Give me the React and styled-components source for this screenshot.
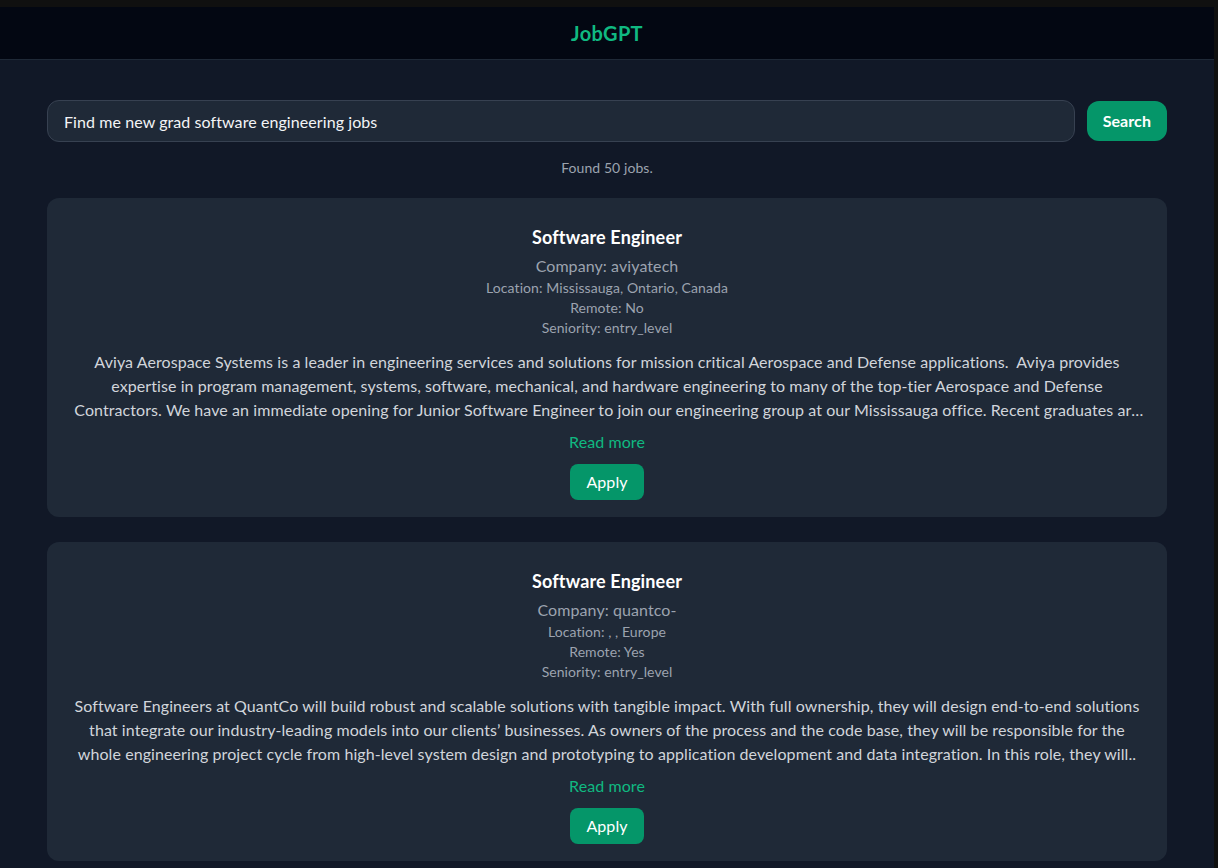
import styled, { createGlobalStyle } from 'styled-components';

const GlobalStyle = createGlobalStyle`
  html, body {
    margin: 0;
    padding: 0;
    background: #101010;
    overflow: hidden;
  }
  body {
    font-family: "Segoe UI", Lato, "Noto Sans", sans-serif;
    letter-spacing: 0.08px;
  }
  * {
    box-sizing: border-box;
  }
`;

const Page = styled.div`
  margin-top: 7px;
  width: 1214px;
  min-height: 861px;
  background: #111827;
  color: #f3f4f6;
`;

const Header = styled.header`
  height: 53px;
  display: flex;
  align-items: center;
  justify-content: center;
  background: #030712;
  border-bottom: 1px solid #1f2937;
`;

const Logo = styled.h1`
  margin: 0;
  font-size: 20px;
  line-height: 28px;
  font-weight: 700;
  color: #10b981;
  letter-spacing: 0.3px;
`;

const Main = styled.main`
  width: 1152px;
  margin: 0 auto;
  padding: 40px 16px 24px;
`;

const SearchRow = styled.form`
  display: flex;
  align-items: center;
  gap: 12px;
`;

const SearchInput = styled.input`
  flex: 1;
  height: 42px;
  padding: 8px 16px;
  border-radius: 12px;
  border: 1px solid #374151;
  background: #1f2937;
  color: #f3f4f6;
  font-family: inherit;
  letter-spacing: inherit;
  font-size: 16px;
  outline: none;
`;

const Button = styled.button`
  padding: ${(p) => (p.$small ? '6px 16px' : '8px 16px')};
  border: none;
  border-radius: ${(p) => (p.$small ? '8px' : '12px')};
  background: #059669;
  color: #fff;
  font-family: inherit;
  letter-spacing: inherit;
  font-size: 16px;
  line-height: 24px;
  font-weight: ${(p) => (p.$small ? 400 : 700)};
  cursor: pointer;
`;

const Found = styled.p`
  margin: 16px 0 20px;
  text-align: center;
  font-size: 14px;
  line-height: 20px;
  color: #9ca3af;
`;

const List = styled.div`
  display: flex;
  flex-direction: column;
  gap: 25px;
`;

const Card = styled.div`
  background: #1f2937;
  border-radius: 12px;
  padding: 25px 24px 17px;
  display: flex;
  flex-direction: column;
  align-items: center;
  text-align: center;
`;

const Title = styled.h2`
  margin: 0 0 3px;
  font-size: 18px;
  line-height: 28px;
  font-weight: 700;
  color: #fff;
  letter-spacing: 0.15px;
`;

const Company = styled.div`
  font-size: 16px;
  line-height: 24px;
  color: #9ca3af;
`;

const Meta = styled.div`
  font-size: 14px;
  line-height: 20px;
  color: #9ca3af;
`;

const Description = styled.p`
  margin: 12px 0 0;
  font-size: 16px;
  line-height: 24px;
  color: #d1d5db;
  display: -webkit-box;
  -webkit-line-clamp: 3;
  -webkit-box-orient: vertical;
  overflow: hidden;
`;

const ReadMore = styled.a`
  margin-top: 8px;
  font-size: 16px;
  line-height: 24px;
  color: #10b981;
  text-decoration: none;
  cursor: pointer;
`;

const ApplyWrap = styled.div`
  margin-top: 10px;
`;

const jobs = [
  {
    title: 'Software Engineer',
    company: 'aviyatech',
    location: 'Mississauga, Ontario, Canada',
    remote: 'No',
    seniority: 'entry_level',
    description:
      'Aviya Aerospace Systems is a leader in engineering services and solutions for mission critical Aerospace and Defense applications.\u00a0 Aviya provides expertise in program management, systems, software, mechanical, and hardware engineering to many of the top-tier Aerospace and Defense Contractors. We have an immediate opening for Junior Software Engineer to join our engineering group at our Mississauga office. Recent graduates are encouraged to apply and will be considered for the role.',
  },
  {
    title: 'Software Engineer',
    company: 'quantco-',
    location: ', , Europe',
    remote: 'Yes',
    seniority: 'entry_level',
    description:
      'Software Engineers at QuantCo will build robust and scalable solutions with tangible impact. With full ownership, they will design end-to-end solutions that integrate our industry-leading models into our clients\u2019 businesses. As owners of the process and the code base, they will be responsible for the whole engineering project cycle from high-level system design and prototyping to application development and data integration. In this role, they will..',
  },
];

export default function App() {
  return (
    <>
      <GlobalStyle />
      <Page>
        <Header>
          <Logo>JobGPT</Logo>
        </Header>
        <Main>
          <SearchRow onSubmit={(e) => e.preventDefault()}>
            <SearchInput defaultValue="Find me new grad software engineering jobs" />
            <Button type="submit">Search</Button>
          </SearchRow>
          <Found>Found 50 jobs.</Found>
          <List>
            {jobs.map((job, i) => (
              <Card key={i}>
                <Title>{job.title}</Title>
                <Company>Company: {job.company}</Company>
                <Meta>Location: {job.location}</Meta>
                <Meta>Remote: {job.remote}</Meta>
                <Meta>Seniority: {job.seniority}</Meta>
                <Description>{job.description}</Description>
                <ReadMore>Read more</ReadMore>
                <ApplyWrap>
                  <Button type="button" $small>
                    Apply
                  </Button>
                </ApplyWrap>
              </Card>
            ))}
          </List>
        </Main>
      </Page>
    </>
  );
}
